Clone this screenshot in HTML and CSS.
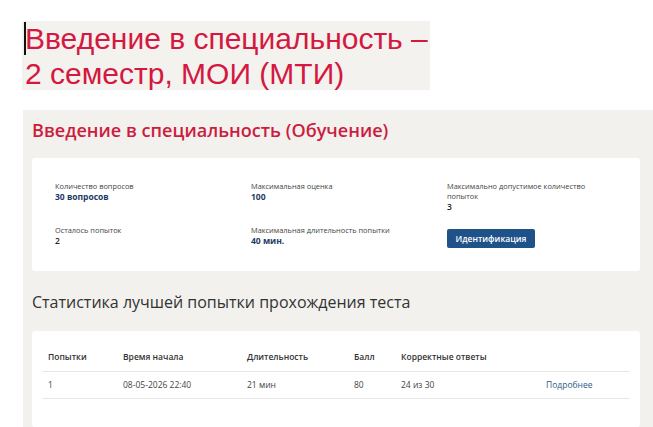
FILE: index.html
```html
<!DOCTYPE html>
<html lang="ru">
<head>
<meta charset="utf-8">
<link rel="stylesheet" href="styles.css">
</head>
<body>
<div class="banner">
  <div class="banner-text"><span class="caret"></span>Введение в специальность –<br>2 семестр, МОИ (МТИ)</div>
</div>
<div class="panel">
  <h1 class="course-title">Введение в специальность (Обучение)</h1>
  <div class="card info">
    <div class="cell">
      <div class="label">Количество вопросов</div>
      <div class="value">30 вопросов</div>
    </div>
    <div class="cell">
      <div class="label">Максимальная оценка</div>
      <div class="value">100</div>
    </div>
    <div class="cell narrow">
      <div class="label">Максимально допустимое количество попыток</div>
      <div class="value plain">3</div>
    </div>
    <div class="cell">
      <div class="label">Осталось попыток</div>
      <div class="value plain">2</div>
    </div>
    <div class="cell">
      <div class="label">Максимальная длительность попытки</div>
      <div class="value">40 мин.</div>
    </div>
    <div class="cell">
      <button class="btn">Идентификация</button>
    </div>
  </div>
  <h2 class="stat-title">Статистика лучшей попытки прохождения теста</h2>
  <div class="card table-card">
    <div class="trow thead">
      <div>Попытки</div><div>Время начала</div><div>Длительность</div><div>Балл</div><div>Корректные ответы</div><div></div>
    </div>
    <div class="trow">
      <div>1</div><div>08-05-2026 22:40</div><div>21 мин</div><div>80</div><div>24 из 30</div><div class="link">Подробнее</div>
    </div>
  </div>
</div>
</body>
</html>
```
FILE: styles.css
```css
html, body {
  margin: 0;
  padding: 0;
  background: #ffffff;
}
body {
  width: 653px;
  height: 427px;
  overflow: hidden;
  font-family: "Open Sans", "Noto Sans", sans-serif;
}
.banner {
  padding: 21px 0 0 22px;
  height: 69px;
}
.banner-text {
  display: inline-block;
  position: relative;
  width: 408px;
  height: 69px;
  box-sizing: border-box;
  padding: 0 0 0 3px;
  background: #f3f2ef;
  font-family: "Liberation Sans", Arial, sans-serif;
  font-size: 30px;
  line-height: 35px;
  color: #d4183f;
  white-space: nowrap;
}
.caret {
  position: absolute;
  left: 2px;
  top: 1px;
  width: 2px;
  height: 33px;
  background: #111;
}
.panel {
  margin: 20px 0 0 23px;
  background: #f2f1ee;
  padding: 9px 13px 0 9px;
  height: 317px;
  box-sizing: border-box;
  overflow: hidden;
}
.course-title {
  margin: 0;
  font-size: 18.1px;
  font-weight: 600;
  color: #cc1d3f;
  line-height: 22px;
}
.card {
  background: #ffffff;
  border-radius: 3px;
}
.info {
  margin-top: 17px;
  height: 113px;
  box-sizing: border-box;
  padding: 23px 0 0 23px;
  display: grid;
  grid-template-columns: 196px 196px 180px;
  grid-template-rows: 41px auto;
  row-gap: 3px;
}
.narrow {
  max-width: 150px;
}
.label {
  font-size: 7.4px;
  line-height: 10px;
  color: #444;
}
.value {
  font-size: 8.5px;
  line-height: 11px;
  font-weight: 700;
  color: #1d3a63;
}
.value.plain {
  font-weight: 600;
  color: #222;
}
.btn {
  margin-top: 1px;
  width: 88px;
  height: 19px;
  border: none;
  border-radius: 2px;
  background: #1f5288;
  color: #fff;
  font-family: "Open Sans", sans-serif;
  font-size: 8.5px;
  font-weight: 600;
  padding: 0;
}
.stat-title {
  margin: 20px 0 0 0;
  font-size: 16px;
  font-weight: 400;
  color: #333;
  line-height: 22px;
}
.table-card {
  margin-top: 18px;
  padding: 19px 10px 0 10px;
  height: 96px;
  box-sizing: border-box;
}
.trow {
  display: grid;
  grid-template-columns: 75px 124px 107px 47px 145px 82px;
  padding-left: 6px;
  border-bottom: 1px solid #e6e6e6;
  font-size: 8.5px;
  line-height: 13px;
  color: #444;
}
.thead {
  font-weight: 600;
  color: #333;
  padding-bottom: 8px;
}
.trow:not(.thead) {
  padding-top: 6px;
  padding-bottom: 7px;
}
.link {
  color: #2d5a8c;
}
```
